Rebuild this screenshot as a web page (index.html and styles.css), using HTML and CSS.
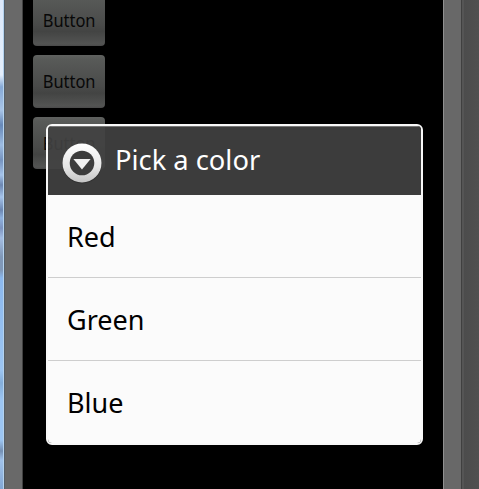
FILE: index.html
```html
<!DOCTYPE html>
<html lang="en">
<head>
<meta charset="utf-8">
<title>Pick a color</title>
<link rel="stylesheet" href="styles.css">
</head>
<body>
<div class="desktop">
  <div class="wallpaper"></div>
  <div class="bezel-left"></div>
  <main class="screen">
    <div class="button"><span>Button</span></div>
    <div class="button"><span>Button</span></div>
    <div class="button"><span>Button</span></div>
    <section class="dialog">
      <header class="dialog-header">
        <svg class="icon" viewBox="0 0 40 42" width="40" height="42">
          <defs>
            <linearGradient id="ring" x1="0" y1="0" x2="0" y2="1">
              <stop offset="0" stop-color="#fff"/>
              <stop offset="0.6" stop-color="#e6e6e6"/>
              <stop offset="1" stop-color="#c4c4c4"/>
            </linearGradient>
          </defs>
          <circle cx="20" cy="20.8" r="19.7" fill="#303030"/>
          <circle cx="20" cy="20" r="19.5" fill="url(#ring)"/>
          <circle cx="20" cy="20" r="12.3" fill="#3c3c3c"/>
          <path d="M11.4 16h17.2L20 26.5z" fill="#f0f0f0"/>
        </svg>
        <h1>Pick a color</h1>
      </header>
      <ul class="options">
        <li><span>Red</span></li>
        <li><span>Green</span></li>
        <li><span>Blue</span></li>
      </ul>
    </section>
  </main>
  <div class="bezel-right"></div>
  <div class="edge"></div>
</div>
</body>
</html>
```
FILE: styles.css
```css
* { box-sizing: border-box; }
body { margin: 0; background: #000; font-family: "Noto Sans", "Open Sans", sans-serif; overflow: hidden; }
.desktop { display: flex; height: 489px; width: 479px; }
.wallpaper {
  width: 4px;
  border-right: 1px solid #b4d2ee;
  background: linear-gradient(#dce8fa 0, #e4eefb 75px, #86a9d6 87px, #a9c5e8 110px, #6688b8 125px, #9dbce2 145px, #7694c0 160px, #a5c3ea 175px, #6c87b2 185px, #a5c3ea 197px, #6c87b2 210px, #8fb2df 218px, #7d94c0 228px, #a4bde2 238px, #8098b8 257px, #8098b8 270px, #8bb8ee 278px, #9cc5f2 370px, #84aeda 383px, #9cc5f2 400px, #9cc5f2 440px, #7590b4 451px, #a0c2ea 460px, #83a7d4 489px);
}
.bezel-left { width: 19px; background: #696969; border-left: 1px solid #565f68; border-right: 1px solid #414141; }
.screen { width: 420px; background: #000; position: relative; padding-left: 10px; display: flex; flex-direction: column; gap: 9px; }
.button {
  flex: none;
  width: 72px;
  height: 52.5px;
  border-radius: 4px;
  background: linear-gradient(#606260 0, #585a58 8%, #4a4b4a 58%, #434443 72%, #535453 96%, #4a4a4a);
  color: #080808;
  display: flex;
  align-items: center;
  justify-content: center;
  font-size: 17.5px;
}
.button:first-child { margin-top: -6.5px; }
.button span { transform: scaleX(0.94); }
.dialog {
  position: absolute;
  left: 23px;
  top: 124px;
  width: 377px;
  height: 321px;
  border: 2px solid #f8f8f8;
  border-radius: 6px;
  overflow: hidden;
}
.dialog-header {
  height: 69px;
  background: rgba(66, 66, 66, 0.91);
  border-top: 1px solid #777;
  display: flex;
  align-items: center;
  padding: 0 0 0 14px;
}
.icon { flex: none; margin-top: 6px; }
h1 { margin: 0 0 0 13px; font-size: 28px; font-weight: 400; line-height: 38px; color: #fff; white-space: nowrap; transform: translateY(-2px) scaleX(0.975); transform-origin: left; }
.options { margin: 0; padding: 0; list-style: none; background: #fbfbfb; }
.options li { height: 83px; border-bottom: 1px solid #cecece; padding-left: 19px; display: flex; align-items: center; font-size: 28px; color: #000; }
.options li:last-child { border-bottom: 0; }
.options span { transform: scaleX(0.965); transform-origin: left; }
.options li:last-child span { transform: translateY(-1px) scaleX(0.965); }
.bezel-right { width: 18px; background: #686868; border-left: 1px solid #909090; }
.edge { width: 18px; background: linear-gradient(90deg, #404040 0, #404040 1px, #555 1px, #555 3px, #4c4c4c 3px, #505050); }
```
